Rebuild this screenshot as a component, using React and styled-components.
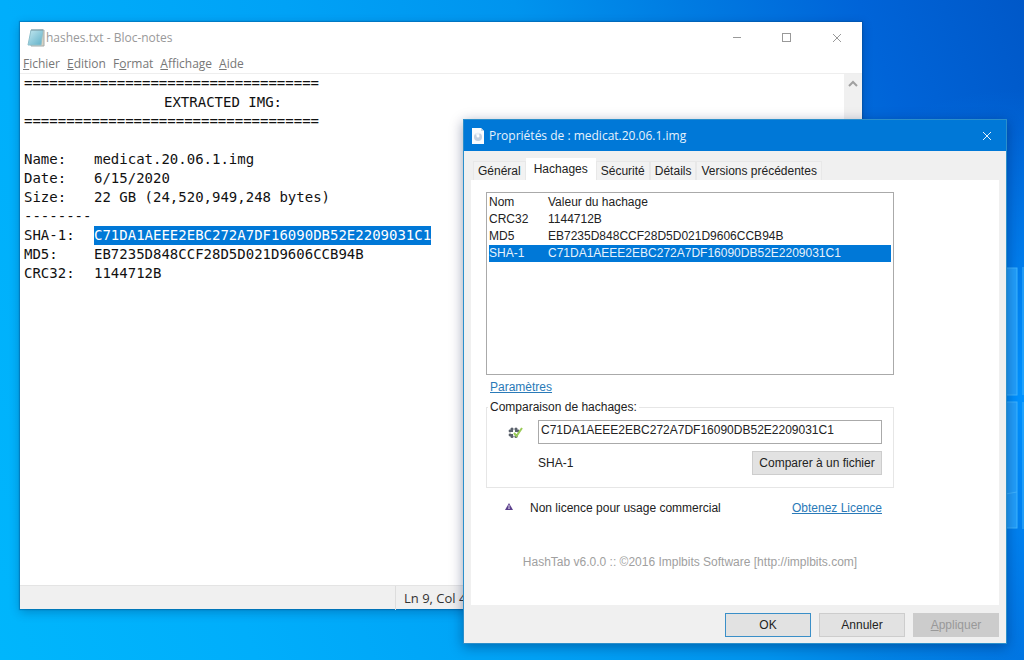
import { useEffect, useRef } from 'react'
import styled, { createGlobalStyle, ThemeProvider } from 'styled-components'

const theme = {
  accent: '#0078d7',
  link: '#2a7ab8',
  face: '#f0f0f0',
  ui: '"Open Sans", "Noto Sans", sans-serif',
  dialog: '"Liberation Sans", Arial, sans-serif',
  mono: '"DejaVu Sans Mono", monospace'
}

const GlobalStyle = createGlobalStyle`
  *, *::before, *::after {
    box-sizing: border-box;
  }
  body {
    margin: 0;
  }
  button, input, textarea {
    font: inherit;
    color: inherit;
  }
`

const Desktop = styled.main`
  position: relative;
  min-height: 100vh;
  overflow: hidden;
  background: radial-gradient(circle at 100% 60%, #0092ff 0%, rgba(0, 146, 255, 0) 28%),
    linear-gradient(
      69deg,
      #00b6fc 0%,
      #00aefb 20%,
      #00a2f6 42%,
      #0094ee 60%,
      #007ce2 73%,
      #0064d8 87%,
      #0058c8 100%
    );
`

const Wallpaper = styled.svg`
  position: absolute;
  right: 0;
  top: 260px;
  width: 24px;
  height: 276px;
`

const Window = styled.section`
  position: absolute;
  display: flex;
  flex-direction: column;
`

const NotepadWindow = styled(Window)`
  top: 22px;
  left: 20px;
  right: 162px;
  bottom: 51px;
  background: #fff;
  color: #777;
  font: 12px/18px ${props => props.theme.ui};
  box-shadow: 0 0 1px 1px rgba(0, 70, 130, 0.35), 0 3px 10px rgba(0, 30, 80, 0.3);
`

const TitleBar = styled.header`
  display: flex;
  align-items: center;
  height: 31px;
  padding-left: 7px;
  color: #999;
`

const Title = styled.h1`
  flex: 1;
  margin: 0;
  font-size: 12px;
  font-weight: 400;
`

const CaptionButton = styled.button`
  display: flex;
  align-items: center;
  justify-content: center;
  width: ${props => props.$width || 50}px;
  height: 100%;
  padding: 0;
  border: 0;
  background: none;
`

const MenuBar = styled.nav`
  display: flex;
  gap: 7px;
  height: 21px;
  padding: 2px 3px 0;
  border-bottom: 1px solid #eee;
`

const MenuItem = styled.button`
  padding: 0;
  border: 0;
  background: none;
`

const Editor = styled.div`
  flex: 1;
  display: flex;
`

const TextArea = styled.textarea`
  flex: 1;
  padding: 0 4px;
  border: 0;
  outline: 0;
  resize: none;
  overflow: hidden;
  color: #111;
  font: 14px/19px ${props => props.theme.mono};
  white-space: pre;
  tab-size: 70px;
  &::selection {
    background: ${props => props.theme.accent};
    color: #fff;
  }
`

const ScrollTrack = styled.div`
  display: flex;
  justify-content: center;
  width: 18px;
  padding-top: 6px;
  background: ${props => props.theme.face};
`

const StatusBar = styled.footer`
  display: grid;
  grid-template-columns: 375px 1fr;
  height: 24px;
  border-top: 1px solid #e4e4e4;
  background: ${props => props.theme.face};
  color: #333;
  font-size: 13px;
  line-height: 24px;
`

const StatusCell = styled.span`
  padding-left: 8px;
  border-left: ${props => (props.$divided ? '1px solid #ddd' : '0')};
`

const PropertiesWindow = styled(Window)`
  top: 119px;
  right: 17px;
  width: 544px;
  border: 1px solid #2b8fcb;
  background: ${props => props.theme.face};
  color: #222;
  font: 12px/17px ${props => props.theme.dialog};
  box-shadow: 0 3px 12px rgba(0, 20, 70, 0.4);
`

const DialogTitleBar = styled(TitleBar)`
  padding-left: 8px;
  gap: 5px;
  background: ${props => props.theme.accent};
  color: #e6f2fc;
  font-family: ${props => props.theme.ui};
`

const TabList = styled.div`
  display: flex;
  align-items: flex-end;
  height: 29px;
  padding: 0 9px;
`

const Tab = styled.button`
  height: ${props => (props.$active ? 22 : 19)}px;
  padding: 0 ${props => (props.$active ? 7 : 4)}px;
  border: 1px solid ${props => (props.$active ? '#fff' : '#e8e8e8')};
  border-bottom: 0;
  background: ${props => (props.$active ? '#fff' : '#f2f2f2')};
`

const Panel = styled.div`
  display: flex;
  flex-direction: column;
  height: 425px;
  margin: 0 7px;
  padding: 12px 105px 0 15px;
  background: #fff;
`

const HashList = styled.div`
  height: 183px;
  padding: 1px 2px;
  border: 1px solid #aaa;
`

const HashTable = styled.table`
  width: 100%;
  border-collapse: collapse;
  text-align: left;
  th,
  td {
    height: 17px;
    padding: 0;
    font-weight: 400;
  }
  th:first-child {
    width: 59px;
  }
`

const HashRow = styled.tr`
  background: ${props => (props.$selected ? props.theme.accent : 'none')};
  color: ${props => (props.$selected ? '#e6f2fc' : 'inherit')};
`

const Link = styled.a`
  color: ${props => props.theme.link};
`

const SettingsLine = styled.div`
  padding: 4px 4px 3px;
`

const Comparison = styled.fieldset`
  display: grid;
  grid-template-columns: 51px 1fr;
  gap: 7px 0;
  align-items: center;
  margin: 0;
  padding: 4px 11px 12px 0;
  border: 1px solid #e6e6e6;
  legend {
    margin-left: 1px;
    padding: 0 2px;
  }
`

const IconCell = styled.span`
  display: flex;
  padding-left: 21px;
`

const HashInput = styled.input`
  height: 24px;
  min-width: 0;
  padding: 0 2px 4px;
  border: 1px solid #aaa;
  background: #fff;
`

const CompareRow = styled.div`
  grid-column: 2;
  display: flex;
  align-items: center;
  justify-content: space-between;
`

const Button = styled.button`
  width: ${props => props.$width || 86}px;
  height: 24px;
  padding: 0;
  border: 1px solid ${props => (props.$primary ? '#3a8fc8' : '#cdcdcd')};
  background: #e2e2e2;
  &:disabled {
    border-color: #ccc;
    background: #ccc;
    color: #999;
  }
`

const LicenceRow = styled.div`
  display: grid;
  grid-template-columns: 44px 1fr auto;
  margin-top: 12px;
  padding-right: 12px;
  svg {
    margin: 3px 0 0 19px;
  }
`

const Credits = styled.p`
  margin: 37px 0 0;
  color: #a0a0a0;
  text-align: center;
`

const Actions = styled.footer`
  display: flex;
  justify-content: flex-end;
  gap: 8px;
  padding: 8px 7px 6px;
`

const hashes = [
  { name: 'CRC32', value: '1144712B' },
  { name: 'MD5', value: 'EB7235D848CCF28D5D021D9606CCB94B' },
  { name: 'SHA-1', value: 'C71DA1AEEE2EBC272A7DF16090DB52E2209031C1' }
]

const sha1 = hashes[2].value
const rule = '='.repeat(35)

const fileText = [
  rule,
  '\t\tEXTRACTED IMG:',
  rule,
  '',
  'Name:\tmedicat.20.06.1.img',
  'Date:\t6/15/2020',
  'Size:\t22 GB (24,520,949,248 bytes)',
  '--------',
  `SHA-1:\t${sha1}`,
  'MD5:\tEB7235D848CCF28D5D021D9606CCB94B',
  'CRC32:\t1144712B'
].join('\n')

const menus = [
  ['', 'F', 'ichier'],
  ['', 'E', 'dition'],
  ['F', 'o', 'rmat'],
  ['', 'A', 'ffichage'],
  ['', 'A', 'ide']
]

const tabs = ['Général', 'Hachages', 'Sécurité', 'Détails', 'Versions précédentes']

const NotepadIcon = () => (
  <svg width="19" height="20" viewBox="0 0 19 20">
    <defs>
      <linearGradient id="cover" x1="0" y1="0" x2="1" y2="1">
        <stop offset="0" stopColor="#c4e8f0" />
        <stop offset="1" stopColor="#5fb0c8" />
      </linearGradient>
    </defs>
    <path d="M4 3 L17 2 L17 18 L4 18 Z" fill="#d8d4c4" stroke="#a4acac" strokeWidth="1" />
    <path d="M4 2 H16 L14 17 H1 Z" fill="url(#cover)" stroke="#8fc0cc" strokeWidth="1" />
    <path d="M4 2 H16" stroke="#7f9aa2" strokeWidth="1" />
  </svg>
)

const ImageFileIcon = () => (
  <svg width="12" height="16" viewBox="0 0 12 16">
    <path d="M0 0 H9 L12 3 V16 H0 Z" fill="#fafcfe" />
    <path d="M9 0 L12 3 H9 Z" fill="#c8d8e6" />
    <circle cx="6" cy="9" r="4" fill="#c3d0e0" />
    <path d="M6 9 L3 6 A4 4 0 0 1 8 5 Z" fill="#e8eff6" />
    <circle cx="6" cy="8" r="1.5" fill="#fff" />
  </svg>
)

const MatchIcon = () => (
  <svg width="15" height="13" viewBox="0 0 15 13">
    <g fill="#5a616b">
      <circle cx="4" cy="3" r="1.6" />
      <circle cx="8" cy="3" r="1.6" />
      <circle cx="2" cy="5" r="1.4" />
      <circle cx="10" cy="5" r="1.4" />
      <circle cx="2" cy="9" r="1.4" />
      <circle cx="4" cy="10.5" r="1.6" />
      <circle cx="8" cy="10.5" r="1.6" />
      <path d="M3 4 H5 V6 H3 Z M7 4 H9 V6 H7 Z M3 8 H5 V10 H3 Z M7 8 H9 V10 H7 Z" />
    </g>
    <path d="M6 7 L8.5 10 L14 2" fill="none" stroke="#9acb58" strokeWidth="2" />
  </svg>
)

const WarningIcon = () => (
  <svg width="8" height="8" viewBox="0 0 8 8">
    <path d="M4 0 L8 7 H0 Z" fill="#5b3f8c" />
    <path d="M4 2 V5" stroke="#d9cfe8" />
    <path d="M4 5 V6" stroke="#fff" />
  </svg>
)

const CloseIcon = () => (
  <svg width="10" height="10" viewBox="0 0 10 10" fill="none" stroke="currentColor">
    <path d="M1 1 L9 9 M9 1 L1 9" />
  </svg>
)

const Notepad = () => {
  const area = useRef(null)

  useEffect(() => {
    const start = fileText.indexOf(sha1)
    area.current.focus()
    area.current.setSelectionRange(start, start + sha1.length)
  }, [])

  return (
    <NotepadWindow>
      <TitleBar>
        <NotepadIcon />
        <Title>hashes.txt - Bloc-notes</Title>
        <CaptionButton aria-label="Réduire">
          <svg width="10" height="10" stroke="currentColor">
            <path d="M1 4.5 H9" />
          </svg>
        </CaptionButton>
        <CaptionButton aria-label="Agrandir">
          <svg width="10" height="10" fill="none" stroke="currentColor">
            <rect x="0.5" y="0.5" width="8" height="8" />
          </svg>
        </CaptionButton>
        <CaptionButton aria-label="Fermer">
          <CloseIcon />
        </CaptionButton>
      </TitleBar>
      <MenuBar>
        {menus.map(([before, key, after]) => (
          <MenuItem key={key + after}>
            {before}
            <u>{key}</u>
            {after}
          </MenuItem>
        ))}
      </MenuBar>
      <Editor>
        <TextArea ref={area} aria-label="hashes.txt" defaultValue={fileText} spellCheck={false} />
        <ScrollTrack>
          <svg width="10" height="8" fill="none" stroke="#a0a0a0" strokeWidth="2">
            <path d="M1 6 L5 2 L9 6" />
          </svg>
        </ScrollTrack>
      </Editor>
      <StatusBar>
        <StatusCell />
        <StatusCell $divided>Ln 9, Col 49</StatusCell>
      </StatusBar>
    </NotepadWindow>
  )
}

const Properties = () => (
  <PropertiesWindow>
    <DialogTitleBar>
      <ImageFileIcon />
      <Title>Propriétés de : medicat.20.06.1.img</Title>
      <CaptionButton aria-label="Fermer" $width={38}>
        <CloseIcon />
      </CaptionButton>
    </DialogTitleBar>
    <TabList role="tablist">
      {tabs.map(tab => (
        <Tab key={tab} role="tab" aria-selected={tab === 'Hachages'} $active={tab === 'Hachages'}>
          {tab}
        </Tab>
      ))}
    </TabList>
    <Panel role="tabpanel">
      <HashList>
        <HashTable>
          <thead>
            <HashRow>
              <th>Nom</th>
              <th>Valeur du hachage</th>
            </HashRow>
          </thead>
          <tbody>
            {hashes.map(({ name, value }) => (
              <HashRow key={name} $selected={name === 'SHA-1'}>
                <td>{name}</td>
                <td>{value}</td>
              </HashRow>
            ))}
          </tbody>
        </HashTable>
      </HashList>
      <SettingsLine>
        <Link href="#parametres">Paramètres</Link>
      </SettingsLine>
      <Comparison>
        <legend>Comparaison de hachages:</legend>
        <IconCell>
          <MatchIcon />
        </IconCell>
        <HashInput aria-label="Comparaison de hachages" defaultValue={sha1} />
        <CompareRow>
          <span>SHA-1</span>
          <Button $width={130}>Comparer à un fichier</Button>
        </CompareRow>
      </Comparison>
      <LicenceRow>
        <WarningIcon />
        <span>Non licence pour usage commercial</span>
        <Link href="#licence">Obtenez Licence</Link>
      </LicenceRow>
      <Credits>HashTab v6.0.0 :: ©2016 Implbits Software [http://implbits.com]</Credits>
    </Panel>
    <Actions>
      <Button $primary>OK</Button>
      <Button>Annuler</Button>
      <Button disabled>
        <u>A</u>ppliquer
      </Button>
    </Actions>
  </PropertiesWindow>
)

export default () => (
  <ThemeProvider theme={theme}>
    <GlobalStyle />
    <Desktop>
      <Wallpaper viewBox="0 0 24 276" aria-hidden="true">
        <g fill="#229ffb" stroke="#3fb4ff">
          <rect x="-20" y="8" width="37" height="127" />
          <rect x="-20" y="142" width="37" height="126" />
          <path d="M23 7 V135 M23 142 V269" />
        </g>
        <path d="M0 235 L17 232" stroke="#3fb4ff" />
      </Wallpaper>
      <Notepad />
      <Properties />
    </Desktop>
  </ThemeProvider>
)
